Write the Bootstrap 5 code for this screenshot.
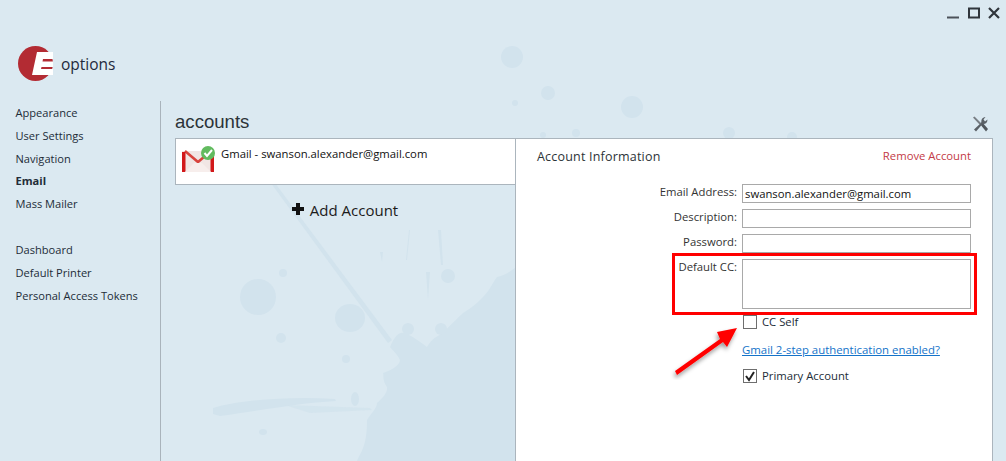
<!DOCTYPE html>
<html lang="en"><head><meta charset="utf-8"><title>options</title>
<link href="https://cdn.jsdelivr.net/npm/bootstrap@5.3.0/dist/css/bootstrap.min.css" rel="stylesheet">
<style>
html,body{height:100%;}
body{background:#dbe9f1;font-family:"Open Sans","Noto Sans",sans-serif;font-size:11.3px;color:#222c38;overflow:hidden;}
.app-shell{position:relative;width:1006px;height:461px;overflow:hidden;}
.splat{position:absolute;left:0;top:0;}
.fg{position:relative;}
.winbar{height:26px;padding:7px 6px 0 0;gap:8.5px;}
.brand{height:75px;padding:20px 0 0 18px;}
.brand-name{font-size:15.5px;margin-left:8px;margin-top:7px;color:#1f2a3c;}
.side{width:161px;flex:none;border-right:1px solid #a9b3bb;height:360px;padding:1px 0 0 15.5px;}
.side a{display:block;color:#222c38;text-decoration:none;height:22.8px;line-height:22.8px;font-size:11.1px;}
.side a.on{font-weight:700;}
.side .gap{height:23px;}
.main{width:845px;padding-left:14px;}
.acct-title{font-family:"Liberation Sans",sans-serif;font-size:18.6px;line-height:20px;padding-top:11px;height:37px;color:#2c3338;}
.tools{margin-right:17px;margin-top:15px;}
.panes{height:323px;}
.left-pane{width:340px;flex:none;}
.acct-row{height:47px;background:#fff;border:1px solid #abb5bd;border-right:0;padding:7px 0 0 6px;}
.acct-text{font-size:11.3px;margin-left:5px;color:#111;line-height:16px;}
.add{font-size:15px;height:54px;padding-top:14px;color:#1b1b1b;gap:6px;}
.right-pane{width:478px;flex:none;background:#fff;border:1px solid #abb5bd;border-bottom:0;padding:9px 21px 0 21px;}
.info-title{font-size:12.5px;color:#2c3338;letter-spacing:.2px;}
.remove{font-size:11.3px;color:#c33a46;text-decoration:none;}
.form-rows{padding-top:17px;}
.frow{gap:5px;margin-bottom:6px;}
.flabel{width:200px;text-align:right;font-size:11.3px;line-height:16px;color:#333;}
.finput{width:229px;height:19px;border:1px solid #a9a9a9;background:#fff;padding:0 2px;font-size:11.3px;line-height:17px;font-family:inherit;color:#111;border-radius:0;outline:0;}
.farea{height:50px;resize:none;}
.under{margin-left:205px;}
.box{width:14px;height:14px;border:1px solid #6e6e6e;background:#fff;flex:none;margin:0 5px 0 1px;}
.cc-row{margin-top:-1px;}
.helper{display:block;color:#1473c9;font-size:11.4px;line-height:16px;margin-top:11px;}
.prime{margin-top:10px;}
.mark-rect{position:absolute;left:672px;top:253px;width:305px;height:62px;border:3px solid #f00;}
.arrow{position:absolute;left:668px;top:325px;}
</style></head><body>
<div class="app-shell">
<svg class="splat" width="1006" height="461" viewBox="0 0 1006 461" aria-hidden="true">
<g fill="#d2e3ed">
<path d="M265 175L269 175L392 340L388 343Z"/>
<path d="M516 267L516 461L357 461C362 450 367 445 367 420C372 412 377 408 377 403C383 398 388 392 387 387C382 380 384 375 383 373C392 370 400 365 400 360C396 352 392 350 390 347C395 335 400 332 403 333C412 335 420 342 427 347C432 338 438 336 443 333C450 325 458 318 463 313C472 308 478 302 483 297C490 290 493 282 497 277C503 276 510 272 516 267Z"/>
<circle cx="258" cy="297" r="18"/><ellipse cx="350" cy="318" rx="15" ry="14"/>
<circle cx="281" cy="338" r="5"/><circle cx="448" cy="276" r="7"/><circle cx="283" cy="273" r="4"/>
<circle cx="408" cy="329" r="6"/><circle cx="441" cy="329" r="6"/><circle cx="346" cy="359" r="4"/>
<path d="M213 408C240 400 290 396 335 399L336 401C300 403 270 409 220 416L213 414Z"/>
<path d="M285 405L370 408L372 410L310 413Z" opacity=".7"/>
<ellipse cx="355" cy="399" rx="4" ry="7"/><ellipse cx="263" cy="432" rx="4" ry="3"/>
<path d="M438 230L441 230L443 265L441 265Z"/><path d="M409 230L410 230L407 260L406 260Z"/>
<path d="M426 272L430 272L428 300Z"/><path d="M380 252L383 252L382 262Z"/>
<circle cx="512" cy="57" r="11"/><circle cx="548" cy="93" r="7"/><circle cx="632" cy="107" r="11"/>
<circle cx="576" cy="133" r="4"/><circle cx="543" cy="135" r="3"/><circle cx="515" cy="103" r="3"/>
<circle cx="729" cy="133" r="6"/><circle cx="792" cy="137" r="5"/>
</g></svg>

<div class="fg">
<div class="winbar d-flex justify-content-end align-items-start">
<svg width="12" height="12" viewBox="0 0 12 12"><rect x="0" y="9.500" width="12" height="2" fill="#4c525a"/></svg>
<svg width="12" height="12" viewBox="0 0 12 12"><rect x="1" y="1.500" width="10" height="9" fill="none" stroke="#30363c" stroke-width="2"/></svg>
<svg width="12" height="12" viewBox="0 0 12 12"><path d="M1 1L11 11M11 1L1 11" stroke="#30363c" stroke-width="2.2" fill="none"/></svg>
</div>
<div class="brand d-flex align-items-start">
<svg width="35" height="35" viewBox="0 0 35 35"><circle cx="17.500" cy="17.500" r="17.500" fill="#b32b33"/><path d="M19 6H35V13H25L24.500 15.500H35V21H23.500L23 23H35V29H14Z" fill="#fff"/></svg>
<span class="brand-name">options</span>
</div>
<div class="d-flex">
<nav class="side">
<a href="#">Appearance</a><a href="#">User Settings</a><a href="#">Navigation</a><a href="#" class="on">Email</a><a href="#">Mass Mailer</a>
<div class="gap"></div>
<a href="#">Dashboard</a><a href="#">Default Printer</a><a href="#">Personal Access Tokens</a>
</nav>
<div class="main">
<div class="d-flex justify-content-between">
<div class="acct-title">accounts</div>
<svg class="tools" width="17" height="17" viewBox="0 0 17 17"><path d="M1 1.500L2.500 0.500L9 7L7.500 8.500Z" fill="#777d83"/><path d="M8 8L10 6L16 13L14 15.500Z" fill="#50565c"/><path d="M2 13.500L9.500 6.500C9 4 10 1.500 13.500 1L11.500 3.500L13 5.500L15.500 3.500C15.500 7 13 8.500 10.500 8L4 15.500Z" fill="#5a6066"/></svg>
</div>
<div class="panes d-flex">
<div class="left-pane">
<div class="acct-row d-flex align-items-start">
<svg width="34" height="29" viewBox="0 0 34 29" class="flex-none">
<rect x="0" y="5" width="32" height="21" fill="#f1e6e4"/><path d="M3 5L16 16L29 5" stroke="#d8433c" stroke-width="2.500" fill="none"/><rect x="0" y="6" width="3.500" height="20" fill="#d2181a"/><rect x="28.500" y="6" width="3.500" height="20" fill="#d2181a"/><path d="M3 26L12 17H20L29 26Z" fill="#f7eeec"/>
<circle cx="26" cy="7" r="7" fill="#62bb5f"/><path d="M22.500 7L25 10L30 4" stroke="#fff" stroke-width="2" fill="none"/>
</svg>
<span class="acct-text">Gmail - swanson.alexander@gmail.com</span>
</div>
<div class="add d-flex justify-content-center">
<svg width="12" height="12" viewBox="0 0 12 12" class="mt-1"><path d="M4 0H8V4H12V8H8V12H4V8H0V4H4Z" fill="#111"/></svg>
<span>Add Account</span>
</div>
</div>
<div class="right-pane">
<div class="d-flex justify-content-between align-items-start">
<div class="info-title">Account Information</div>
<a class="remove" href="#">Remove Account</a>
</div>
<div class="form-rows">
<div class="frow d-flex"><label class="flabel">Email Address:</label><input class="finput" value="swanson.alexander@gmail.com"></div>
<div class="frow d-flex"><label class="flabel">Description:</label><input class="finput"></div>
<div class="frow d-flex"><label class="flabel">Password:</label><input class="finput"></div>
<div class="frow d-flex"><label class="flabel">Default CC:</label><textarea class="finput farea"></textarea></div>
<div class="under">
<div class="cc-row d-flex align-items-center"><span class="box"></span>CC Self</div>
<a class="helper" href="#">Gmail 2-step authentication enabled?</a>
<div class="prime d-flex align-items-center"><span class="box d-flex"><svg width="12" height="12" viewBox="0 0 12 12"><path d="M2 6L5 10L10 2" stroke="#222" stroke-width="2" fill="none"/></svg></span>Primary Account</div>
</div>
</div>
</div>
</div>
</div>
</div>
</div>
<div class="mark-rect"></div>
<svg class="arrow" width="74" height="58" viewBox="0 0 74 58"><defs><filter id="sh"><feDropShadow dx="-1" dy="3" stdDeviation="2" flood-color="#000" flood-opacity=".4"/></filter></defs><path d="M7 46L52 14L49 7L69 3L59 22L55 17L9 50Z" fill="#f00" filter="url(#sh)"/></svg>
</div>
</body></html>
